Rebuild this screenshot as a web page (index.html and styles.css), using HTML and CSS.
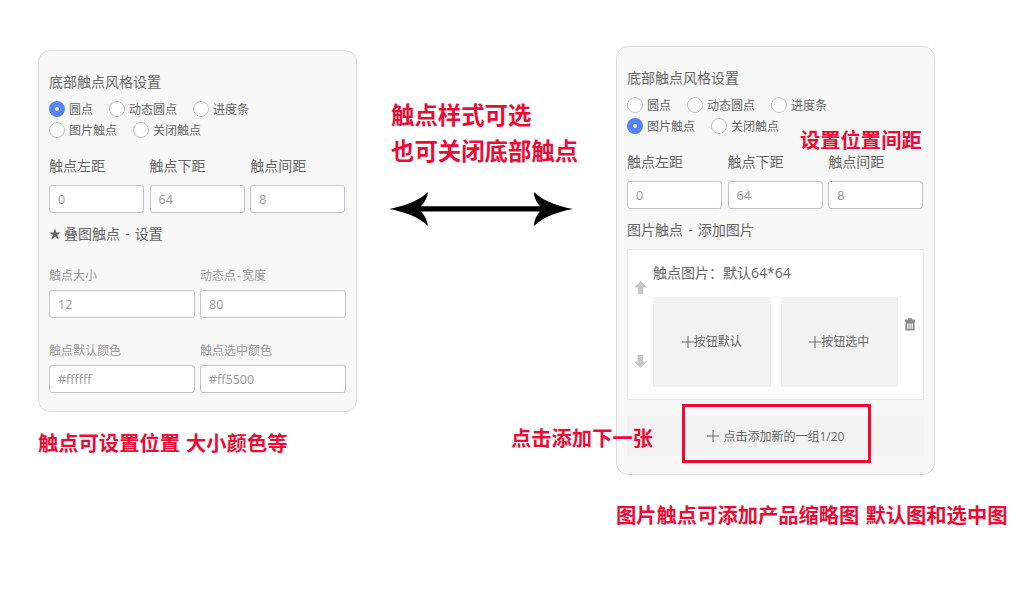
FILE: index.html
```
<!DOCTYPE html>
<html lang="zh-CN">
<head>
  <meta charset="UTF-8">
  <title>底部触点风格设置</title>
  <meta name="viewport" content="width=device-width,initial-scale=1">
  <link rel="stylesheet" href="styles.css">
</head>
<body>
<div class="page">

  <!-- Dot style settings -->
  <section class="col col-left">
    <div class="panel">
      <h3 class="title">底部触点风格设置</h3>
      <div class="radios">
        <div class="radio-row">
          <span class="radio on"><i></i><b>圆点</b></span>
          <span class="radio"><i></i><b>动态圆点</b></span>
          <span class="radio"><i></i><b>进度条</b></span>
        </div>
        <div class="radio-row">
          <span class="radio"><i></i><b>图片触点</b></span>
          <span class="radio"><i></i><b>关闭触点</b></span>
        </div>
      </div>
      <div class="fields three">
        <label>触点左距<input value="0"></label>
        <label>触点下距<input value="64"></label>
        <label>触点间距<input value="8"></label>
      </div>
      <h3 class="title sub">
        <svg class="star" viewBox="0 0 12 12"><path d="M6 .4 7.4 4.5H11.7L8.2 7 9.5 11.2 6 8.7 2.5 11.2 3.8 7 .3 4.5H4.6Z"/></svg>叠图触点 - 设置
      </h3>
      <div class="fields two">
        <label>触点大小<input value="12"></label>
        <label>动态点<span class="dash">-</span>宽度<input value="80"></label>
        <label>触点默认颜色<input value="#ffffff"></label>
        <label>触点选中颜色<input value="#ff5500"></label>
      </div>
    </div>
    <p class="note">触点可设置位置 大小颜色等</p>
  </section>

  <!-- Notes between the panels -->
  <section class="col col-mid">
    <p class="note big">触点样式可选<br>也可关闭底部触点</p>
    <svg class="arrow" viewBox="0 0 184 36" width="184" height="36">
      <path d="M0 18Q27 13 39 1Q38 9 32 15.2H151Q145 9 145 1Q157 13 184 18Q157 23 145 35Q145 27 151 20.6H32Q38 27 39 35Q27 23 0 18Z"/>
    </svg>
  </section>

  <!-- Image dot settings -->
  <section class="col col-right">
    <div class="panel">
      <h3 class="title">底部触点风格设置</h3>
      <div class="radios">
        <div class="radio-row">
          <span class="radio"><i></i><b>圆点</b></span>
          <span class="radio"><i></i><b>动态圆点</b></span>
          <span class="radio"><i></i><b>进度条</b></span>
        </div>
        <div class="radio-row">
          <span class="radio on"><i></i><b>图片触点</b></span>
          <span class="radio"><i></i><b>关闭触点</b></span>
        </div>
      </div>
      <div class="fields three">
        <label>触点左距<input value="0"></label>
        <label>触点下距<input value="64"></label>
        <label>触点间距<input value="8"></label>
      </div>
      <h3 class="title sub">图片触点 - 添加图片</h3>
      <div class="group">
        <div class="move">
          <svg viewBox="0 0 13 13"><path d="M6.5 0 13 6.5H9.3V13H3.7V6.5H0Z"/></svg>
          <svg viewBox="0 0 13 13"><path d="M6.5 13 0 6.5H3.7V0H9.3V6.5H13Z"/></svg>
        </div>
        <div class="images">
          <div class="images-title">触点图片：默认64*64</div>
          <div class="tiles">
            <div class="tile"><svg class="plus" viewBox="0 0 12 12"><path d="M6 0V12M0 6H12"/></svg>按钮默认</div>
            <div class="tile"><svg class="plus" viewBox="0 0 12 12"><path d="M6 0V12M0 6H12"/></svg>按钮选中</div>
          </div>
        </div>
        <svg class="trash" viewBox="0 0 10 13">
          <path d="M0 1.5H3V.3H7V1.5H10V4H0Z"/>
          <path fill-rule="evenodd" d="M.4 4H9.6V12.6H.4ZM2.3 5.5V10.8H3.5V5.5ZM4.5 5.5V10.8H5.6V5.5ZM6.6 5.5V10.8H7.8V5.5Z"/>
        </svg>
      </div>
      <div class="add">
        <svg class="plus" viewBox="0 0 12 12"><path d="M6 0V12M0 6H12"/></svg>
        <span>点击添加新的一组1/20</span>
        <div class="frame"></div>
      </div>
    </div>
    <p class="note">图片触点可添加产品缩略图 默认图和选中图</p>
    <p class="note over spacing">设置位置间距</p>
    <p class="note over next">点击添加下一张</p>
  </section>

</div>
</body>
</html>
```
FILE: styles.css
```
:root {
  --red: #ee0a35;
  --blue: #5584ff;
  --text: #666;
  --muted: #999;
  --panel: #f8f8f8;
  --tile: #f2f2f2;
  --line: #c3c2cf;
}
* { box-sizing: border-box; }
body {
  margin: 0;
  background: #fff;
  color: var(--text);
  font: 12px/20px "Open Sans", "Noto Sans CJK SC", sans-serif;
}
h3, p { margin: 0; }
.page {
  display: flex;
  align-items: flex-start;
  width: 1034px;
  height: 600px;
  padding-left: 38px;
  overflow: hidden;
}
.col { flex: none; }
.col-left { width: 319px; padding-top: 50px; }
.col-mid { width: 226px; margin-left: 33px; padding-top: 96px; }
.col-right { position: relative; width: 400px; padding-top: 46px; }

/* Panels */
.panel {
  width: 319px;
  padding: 21px 10px 18px;
  background: var(--panel);
  border: 1px solid #dcdcdc;
  border-radius: 12px;
}
.title {
  display: flex;
  align-items: center;
  font-size: 14px;
  font-weight: inherit;
  word-spacing: 1.5px;
}
.title.sub { margin-top: 11px; }
.star { width: 12px; height: 12px; margin-right: 3px; fill: var(--text); }

/* Radios */
.radios { margin-top: 7px; }
.radio-row { display: flex; gap: 16px; }
.radio-row + .radio-row { margin-top: 1px; }
.radio { display: flex; align-items: center; gap: 4px; height: 20px; }
.radio b { padding-top: 2px; font-weight: inherit; }
.radio i {
  width: 16px;
  height: 16px;
  background: #fff;
  border: 1px solid var(--line);
  border-radius: 50%;
}
.radio.on i { border: 6px solid var(--blue); }

/* Inputs */
.fields { display: grid; }
.fields.three {
  grid-template-columns: repeat(3, 95px);
  column-gap: 5.6px;
  margin-top: 16px;
  font-size: 14px;
}
.fields.two {
  grid-template-columns: repeat(2, 146px);
  gap: 23px 5px;
  margin-top: 22px;
  color: var(--muted);
}
.fields label { display: block; white-space: nowrap; }
.fields input {
  display: block;
  width: 100%;
  height: 28px;
  margin-top: 4px;
  padding: 0 8px;
  color: var(--muted);
  font: 12.5px "Open Sans", sans-serif;
  background: #fff;
  border: 1px solid var(--line);
  border-radius: 3px;
}
.fields.three input { margin-top: 9px; }
.dash { padding: 0 1px; }

/* Image group */
.group {
  display: flex;
  height: 151px;
  margin-top: 9px;
  background: #fff;
  border: 1px solid #ececec;
}
.move {
  display: flex;
  flex-direction: column;
  justify-content: space-between;
  width: 13px;
  margin: 31px 6px 31px 6px;
}
.move svg { width: 13px; height: 13px; fill: #c8c8c8; }
.images { width: 245px; }
.images-title { margin: 13px 0 14px; font-size: 14px; }
.tiles { display: flex; gap: 10px; }
.tile {
  flex: 1;
  display: flex;
  align-items: center;
  justify-content: center;
  height: 90px;
  background: var(--tile);
}
.plus { width: 12px; height: 12px; stroke: var(--text); stroke-width: 1; }
.trash { width: 10px; height: 13px; margin: 68px 0 0 7px; fill: #8c8c8c; }
.add {
  position: relative;
  display: flex;
  align-items: center;
  justify-content: center;
  gap: 5px;
  height: 40px;
  margin-top: 16px;
  background: var(--tile);
}
.add span { padding-top: 1px; }
.frame {
  position: absolute;
  top: -12px;
  left: 55px;
  width: 189px;
  height: 59px;
  border: 3px solid var(--red);
}

/* Red notes */
.note {
  margin-top: 19px;
  color: var(--red);
  font: 700 20.3px/22px "Noto Sans CJK SC", sans-serif;
  word-spacing: 1.5px;
  white-space: nowrap;
}
.note.big { margin: 0 0 0 1px; font-size: 23.4px; line-height: 36px; }
.col-right .note { margin-top: 28px; }
.col-right .note.over { position: absolute; margin: 0; }
.over.spacing { top: 128px; left: 184px; }
.over.next { top: 426px; left: -105px; }
.arrow { display: block; margin: 23px 0 0 -1px; }
```
